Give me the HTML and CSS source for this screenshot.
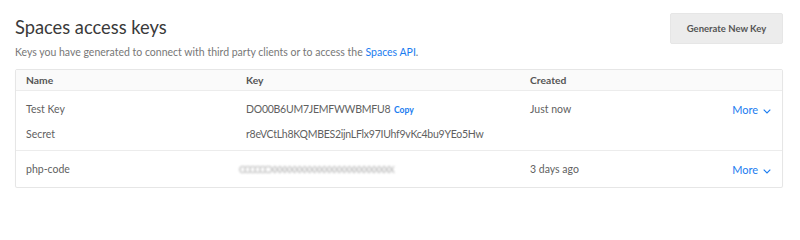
FILE: index.html
```html
<!DOCTYPE html>
<html>
<head>
<meta charset="utf-8">
<link rel="stylesheet" href="styles.css">
</head>
<body>
<div class="page">
  <div class="top">
    <div class="intro">
      <h1 class="title">Spaces access keys</h1>
      <p class="sub">Keys you have generated to connect with third party clients or to access the <a class="link" href="#">Spaces API</a>.</p>
    </div>
    <button class="btn">Generate New Key</button>
  </div>
  <div class="table">
    <div class="row head">
      <div>Name</div>
      <div>Key</div>
      <div>Created</div>
      <div></div>
    </div>
    <div class="row item double">
      <div>Test Key</div>
      <div><span class="val">DO00B6UM7JEMFWWBMFU8</span> <span class="copy">Copy</span></div>
      <div>Just now</div>
      <div class="more">More <svg class="chev" width="8" height="5" viewBox="0 0 8 5"><path d="M0.7 0.7l3.3 3.3 3.3-3.3" fill="none" stroke="currentColor" stroke-width="1.1"/></svg></div>
      <div>Secret</div>
      <div><span class="val">r8eVCtLh8KQMBES2ijnLFlx97IUhf9vKc4bu9YEo5Hw</span></div>
      <div></div>
      <div></div>
    </div>
    <div class="row item single">
      <div>php-code</div>
      <div><span class="blur">CCCCCCXXXXXXXXXXXXXXXXXXXXXXXXX</span></div>
      <div>3 days ago</div>
      <div class="more">More <svg class="chev" width="8" height="5" viewBox="0 0 8 5"><path d="M0.7 0.7l3.3 3.3 3.3-3.3" fill="none" stroke="currentColor" stroke-width="1.1"/></svg></div>
    </div>
  </div>
</div>
</body>
</html>
```
FILE: styles.css
```css
html, body {
  margin: 0;
  padding: 0;
  background: #fff;
}
body {
  font-family: Lato, "Open Sans", sans-serif;
  color: #666;
}
.page {
  padding: 13px 17px 0 15px;
}
.top {
  display: flex;
  justify-content: space-between;
  align-items: flex-start;
}
.title {
  margin: 0;
  padding-top: 3px;
  font-size: 18.3px;
  line-height: 22px;
  font-weight: 400;
  color: #3a3a3a;
}
.sub {
  margin: 7px 0 0;
  font-size: 10.5px;
  line-height: 14px;
  color: #777;
}
.link {
  color: #1a7cf0;
  text-decoration: none;
}
.btn {
  width: 113px;
  height: 31px;
  border: 1px solid #e6e6e6;
  border-radius: 2px;
  background: #ececec;
  color: #555;
  font-family: inherit;
  font-size: 9.5px;
  font-weight: 700;
  padding: 0;
}
.table {
  margin-top: 10px;
  border: 1px solid #e6e6e6;
  border-radius: 2px;
  box-shadow: 0 1px 1px rgba(0,0,0,0.04);
}
.row {
  display: grid;
  grid-template-columns: 220px 284px 1fr 80px;
  padding: 0 11px 0 10px;
  font-size: 10.5px;
}
.head {
  height: 20px;
  line-height: 20px;
  background: #fafafa;
  border-bottom: 1px solid #ececec;
  font-weight: 700;
  color: #555;
  font-size: 10.3px;
}
.item {
  color: #5f5f5f;
}
.val {
  letter-spacing: -0.25px;
}
.double {
  padding-top: 6px;
  padding-bottom: 3px;
  grid-auto-rows: 25px;
  line-height: 25px;
  border-bottom: 1px solid #ececec;
}
.single {
  padding-top: 1px;
  line-height: 35px;
}
.copy {
  color: #1a7cf0;
  font-size: 8.6px;
  font-weight: 700;
  margin-left: 1px;
}
.more {
  color: #1a7cf0;
  text-align: right;
  font-size: 11px;
}
.chev {
  margin-left: 2px;
  vertical-align: middle;
}
.blur {
  color: #a8a8a8;
  filter: blur(1.1px);
  letter-spacing: -1.2px;
  font-size: 9.5px;
  margin-left: -7px;
}
```
